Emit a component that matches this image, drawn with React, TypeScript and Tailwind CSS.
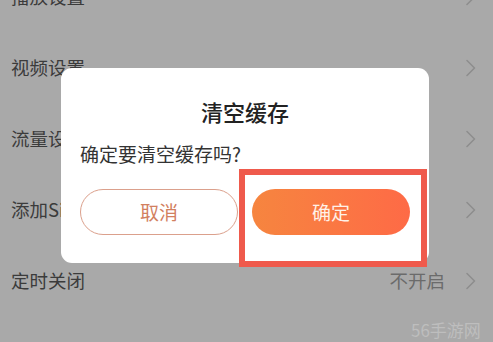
import React from "react";

// ---------------------------------------------------------------------------
// Settings list behind the dim layer
// ---------------------------------------------------------------------------

interface SettingRow {
  label: string;
  value?: string;
}

const ROWS: SettingRow[] = [
  { label: "播放设置" },
  { label: "视频设置" },
  { label: "流量设置" },
  { label: "添加Siri捷径" },
  { label: "定时关闭", value: "不开启" },
  { label: "清空缓存" },
];

const FONT = {
  fontFamily: '"Noto Sans CJK SC", "Noto Sans", sans-serif',
};

function Chevron() {
  return (
    <svg width="12" height="18" viewBox="0 0 12 18" fill="none" className="shrink-0">
      <path
        d="M2 1.5 L9.5 9 L2 16.5"
        stroke="#8e8e8e"
        strokeWidth="1.6"
        strokeLinecap="round"
        strokeLinejoin="round"
      />
    </svg>
  );
}

function SettingsList() {
  return (
    <div className="-mt-[39px] flex flex-col">
      {ROWS.map((row) => (
        <div key={row.label} className="flex h-[71px] items-center pl-[11px] pr-[16px]">
          <span className="flex-1 text-[18.5px] text-[#3b3b3b]">{row.label}</span>
          {row.value && (
            <span className="mr-[20px] text-[18.5px] text-[#6b6b6b]">{row.value}</span>
          )}
          <Chevron />
        </div>
      ))}
    </div>
  );
}

// ---------------------------------------------------------------------------
// Clear-cache confirm dialog
// ---------------------------------------------------------------------------

function ConfirmDialog() {
  return (
    <div className="absolute left-[61px] top-[68px] flex h-[195px] w-[368px] flex-col rounded-[11px] bg-white px-[19px]">
      <div className="mt-[29px] text-center text-[22px] font-medium leading-[28px] text-[#222]">
        清空缓存
      </div>
      <div className="mt-[17px] text-[19px] leading-[24px] text-[#333]">确定要清空缓存吗?</div>
      <div className="mt-[23px] flex gap-[14px]">
        <button
          type="button"
          className="flex h-[46px] w-[158px] items-center justify-center rounded-full border-[1.5px] border-[#dba08c] text-[19px] text-[#d2805f]"
        >
          取消
        </button>
        <button
          type="button"
          className="flex h-[46px] w-[158px] items-center justify-center rounded-full bg-gradient-to-r from-[#f6853f] to-[#fe6a46] text-[19px] text-[#fff1e8]"
        >
          确定
        </button>
      </div>
    </div>
  );
}

export default function App() {
  return (
    <div className="relative h-[342px] w-[493px] overflow-hidden bg-[#a9a9a9]" style={FONT}>
      <SettingsList />
      <ConfirmDialog />

      {/* annotation box round the confirm button */}
      <div className="absolute left-[239px] top-[169px] h-[98px] w-[188px] border-[6px] border-[#ef5a4c]" />

      {/* watermark */}
      <div className="absolute left-[411px] top-[317px] text-[17px] text-white/25">56手游网</div>
    </div>
  );
}
